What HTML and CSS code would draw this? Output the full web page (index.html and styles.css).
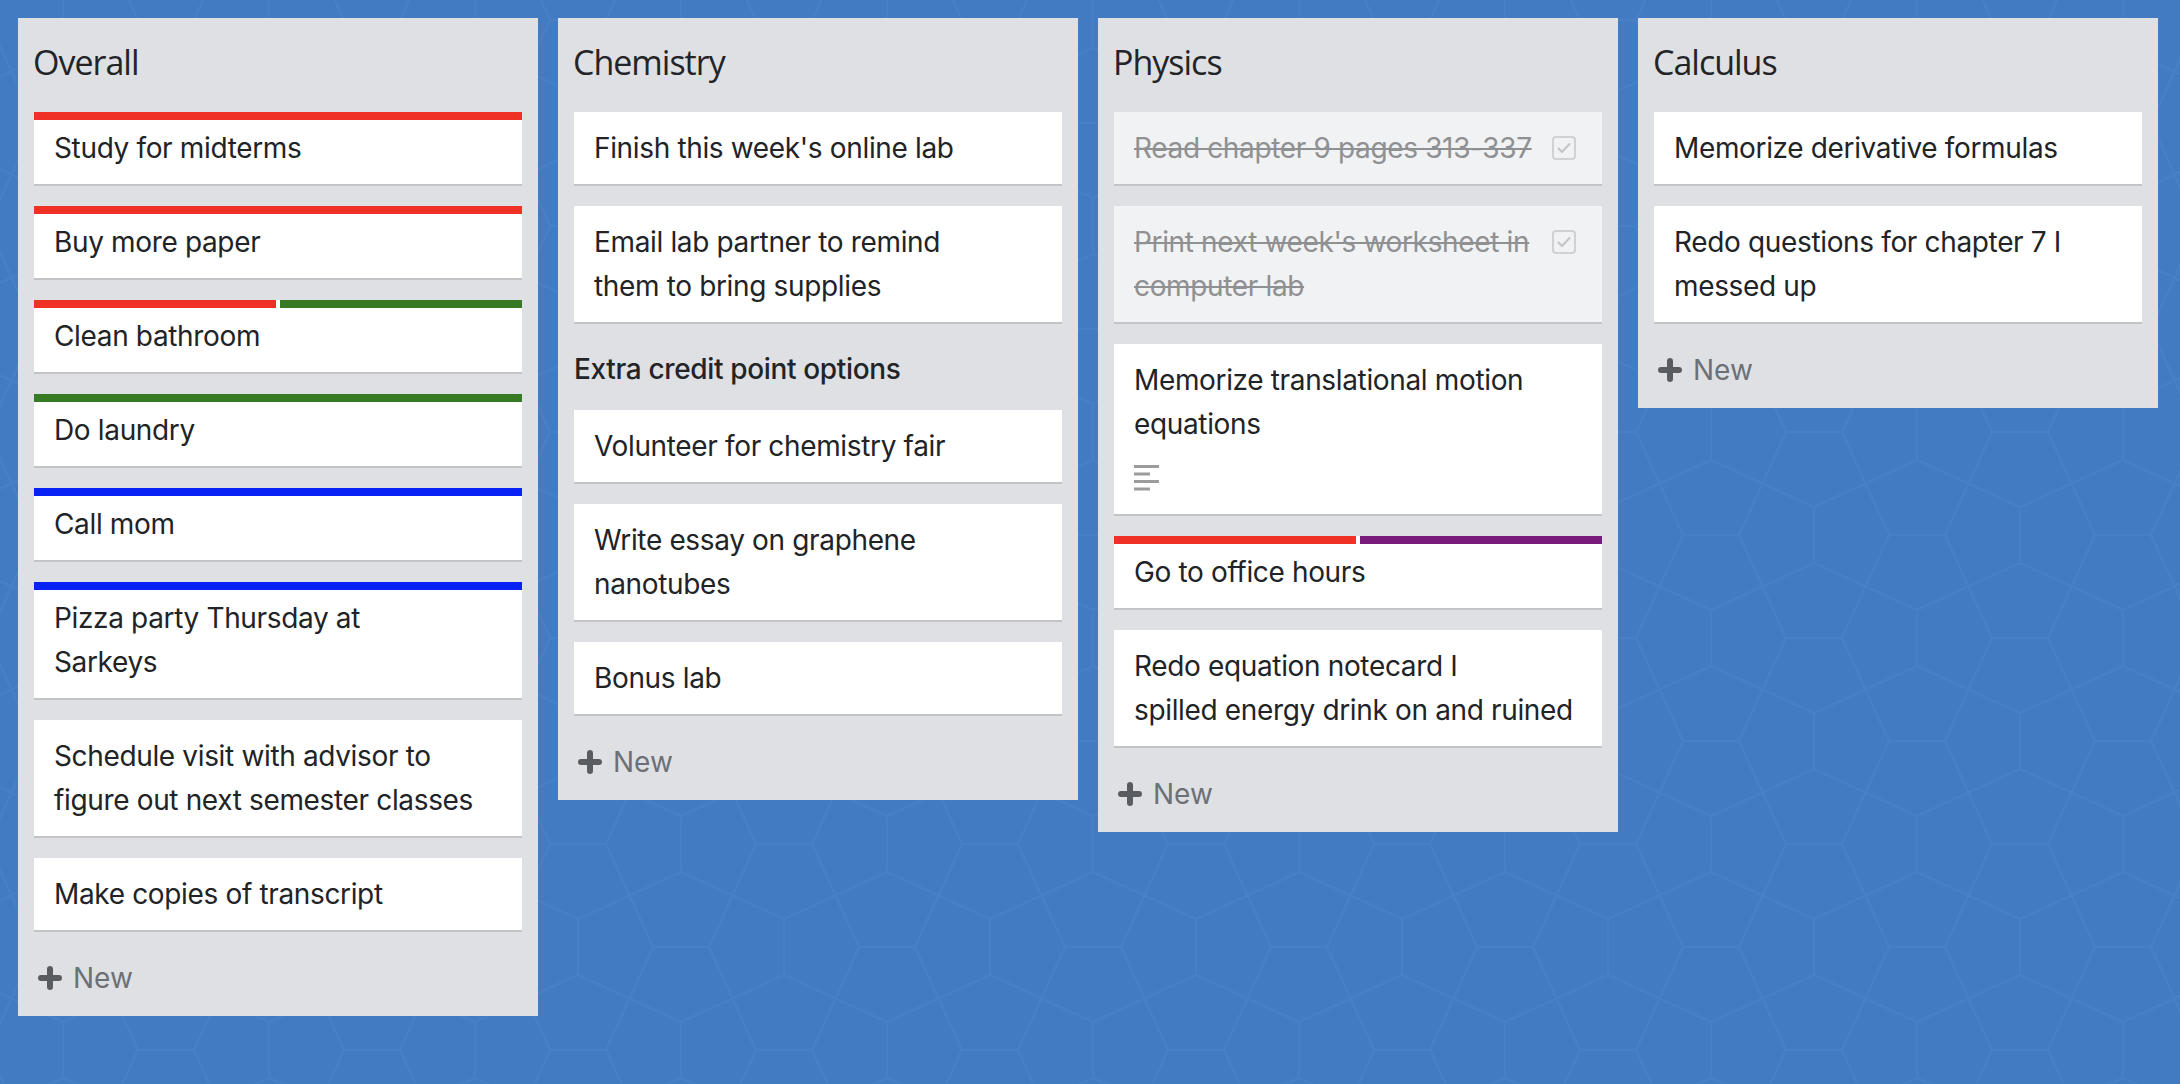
FILE: index.html
```html
<!DOCTYPE html>
<html>
<head>
  <title>Boards</title>
  <link rel="stylesheet" href="styles.css">
</head>
<body>
  <div class="board">

    <div class="list">
      <h2 class="list-title">Overall</h2>
      <div class="cards">
        <div class="card">
          <div class="labels"><span class="label red"></span></div>
          <div class="card-text">Study for midterms</div>
        </div>
        <div class="card">
          <div class="labels"><span class="label red"></span></div>
          <div class="card-text">Buy more paper</div>
        </div>
        <div class="card">
          <div class="labels"><span class="label red"></span><span class="label green"></span></div>
          <div class="card-text">Clean bathroom</div>
        </div>
        <div class="card">
          <div class="labels"><span class="label green"></span></div>
          <div class="card-text">Do laundry</div>
        </div>
        <div class="card">
          <div class="labels"><span class="label blue"></span></div>
          <div class="card-text">Call mom</div>
        </div>
        <div class="card">
          <div class="labels"><span class="label blue"></span></div>
          <div class="card-text">Pizza party Thursday at<br>Sarkeys</div>
        </div>
        <div class="card">
          <div class="card-text">Schedule visit with advisor to<br>figure out next semester classes</div>
        </div>
        <div class="card">
          <div class="card-text">Make copies of transcript</div>
        </div>
      </div>
      <div class="new-card">
        <svg class="plus" width="26" height="26" viewBox="0 0 26 26"><path d="M13 4V22M4 13H22" /></svg>
        <span>New</span>
      </div>
    </div>

    <div class="list">
      <h2 class="list-title">Chemistry</h2>
      <div class="cards">
        <div class="card">
          <div class="card-text">Finish this week's online lab</div>
        </div>
        <div class="card">
          <div class="card-text">Email lab partner to remind<br>them to bring supplies</div>
        </div>
        <div class="section-title">Extra credit point options</div>
        <div class="card">
          <div class="card-text">Volunteer for chemistry fair</div>
        </div>
        <div class="card">
          <div class="card-text">Write essay on graphene<br>nanotubes</div>
        </div>
        <div class="card">
          <div class="card-text">Bonus lab</div>
        </div>
      </div>
      <div class="new-card">
        <svg class="plus" width="26" height="26" viewBox="0 0 26 26"><path d="M13 4V22M4 13H22" /></svg>
        <span>New</span>
      </div>
    </div>

    <div class="list">
      <h2 class="list-title">Physics</h2>
      <div class="cards">
        <div class="card done">
          <div class="card-row">
            <div class="card-text">Read chapter 9 pages 313-337</div>
            <svg class="check" width="24" height="24" viewBox="0 0 24 24"><rect x="1" y="1" width="22" height="22" rx="3" /><path d="M6.5 12.5l3.5 3.5 7.5-8" /></svg>
          </div>
        </div>
        <div class="card done">
          <div class="card-row">
            <div class="card-text">Print next week's worksheet in<br>computer lab</div>
            <svg class="check" width="24" height="24" viewBox="0 0 24 24"><rect x="1" y="1" width="22" height="22" rx="3" /><path d="M6.5 12.5l3.5 3.5 7.5-8" /></svg>
          </div>
        </div>
        <div class="card">
          <div class="card-text">Memorize translational motion<br>equations</div>
          <div class="card-meta">
            <svg class="desc" width="26" height="26" viewBox="0 0 26 26"><path d="M0 1.5H25M0 9H16M0 16.5H25M0 24H16" /></svg>
          </div>
        </div>
        <div class="card">
          <div class="labels"><span class="label red"></span><span class="label purple"></span></div>
          <div class="card-text">Go to office hours</div>
        </div>
        <div class="card">
          <div class="card-text">Redo equation notecard I<br>spilled energy drink on and ruined</div>
        </div>
      </div>
      <div class="new-card">
        <svg class="plus" width="26" height="26" viewBox="0 0 26 26"><path d="M13 4V22M4 13H22" /></svg>
        <span>New</span>
      </div>
    </div>

    <div class="list">
      <h2 class="list-title">Calculus</h2>
      <div class="cards">
        <div class="card">
          <div class="card-text">Memorize derivative formulas</div>
        </div>
        <div class="card">
          <div class="card-text">Redo questions for chapter 7 I<br>messed up</div>
        </div>
      </div>
      <div class="new-card">
        <svg class="plus" width="26" height="26" viewBox="0 0 26 26"><path d="M13 4V22M4 13H22" /></svg>
        <span>New</span>
      </div>
    </div>

  </div>
</body>
</html>
```

FILE: styles.css
```css
html, body { margin: 0; height: 100%; }
body {
  font-family: Inter, "Noto Sans", sans-serif;
  color: #212326;
  background-color: #437bc3;
  background-image: url("data:image/svg+xml;utf8,<svg xmlns='http://www.w3.org/2000/svg' width='206' height='206'><path fill='none' stroke='%23487fc5' stroke-width='2' d='M-28 0H28M178 0H234M-28 206H28M178 206H234M75 103H131M103 -28V28M103 178V234M0 75V131M206 75V131M51.5 51.5L28 0M51.5 51.5L103 28M51.5 51.5L0 75M51.5 51.5L75 103M154.5 51.5L103 28M154.5 51.5L178 0M154.5 51.5L131 103M154.5 51.5L206 75M51.5 154.5L0 131M51.5 154.5L75 103M51.5 154.5L28 206M51.5 154.5L103 178M154.5 154.5L131 103M154.5 154.5L206 131M154.5 154.5L103 178M154.5 154.5L178 206'/></svg>");
  background-position: -40px 20px;
}

.board {
  display: flex;
  align-items: flex-start;
  gap: 20px;
  padding: 18px;
}

.list {
  width: 520px;
  flex: none;
  box-sizing: border-box;
  background: #dfe0e4;
  padding: 16px;
}

.list-title {
  margin: 0 0 22px -1px;
  font-family: "Open Sans", sans-serif;
  font-weight: 400;
  font-size: 34px;
  letter-spacing: -1px;
  line-height: 56px;
  color: #222427;
}

.cards {
  display: flex;
  flex-direction: column;
  gap: 20px;
}

.card {
  background: #fff;
  border-bottom: 2px solid #c3c4c7;
  padding: 14px 16px 14px 20px;
  font-size: 28px;
  line-height: 44px;
  letter-spacing: -0.35px;
}
.card-text { white-space: nowrap; }

.card.done { background: #f1f2f4; }
.card.done .card-text {
  color: #8f9092;
  text-decoration: line-through;
  text-decoration-thickness: 2px;
}

.card-row {
  display: flex;
  align-items: flex-start;
  gap: 12px;
}
.card-row .card-text { flex: 1; }

.check { flex: none; margin: 10px 10px 0 0; }
.check rect { fill: none; stroke: #d0d1d4; stroke-width: 2; }
.check path { fill: none; stroke: #c3c4c7; stroke-width: 2; stroke-linecap: round; stroke-linejoin: round; }

.labels {
  display: flex;
  gap: 4px;
  height: 8px;
  margin: -14px -16px 6px -20px;
}
.label { flex: 1; }
.red { background: #ee3124; }
.green { background: #367b23; }
.blue { background: #0822f5; }
.purple { background: #781b7b; }

.card-meta {
  display: flex;
  align-items: center;
  height: 44px;
  margin-top: 10px;
}
.desc path { stroke: #9c9c9e; stroke-width: 3; }

.section-title {
  font-size: 28px;
  font-weight: 500;
  letter-spacing: -0.35px;
  line-height: 44px;
  padding-top: 3px;
  margin-bottom: -1px;
  color: #222427;
}

.new-card {
  display: flex;
  align-items: center;
  gap: 10px;
  height: 44px;
  margin-top: 24px;
  padding-left: 3px;
  font-size: 28px;
  color: #6c7075;
}
.plus path { stroke: #595d61; stroke-width: 6; stroke-linecap: round; fill: none; }
```
